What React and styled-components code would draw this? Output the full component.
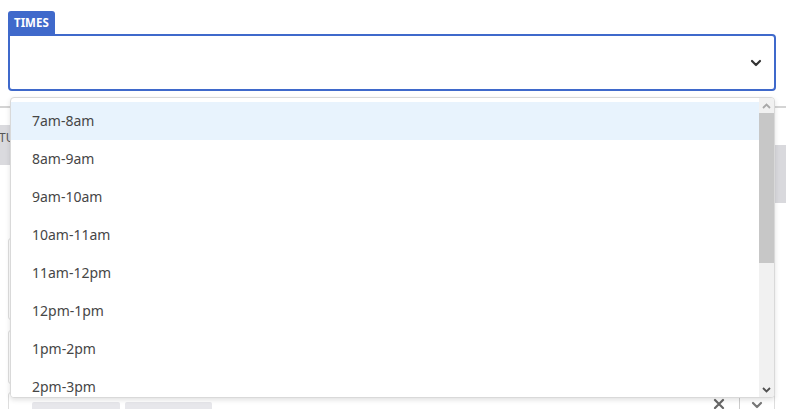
import React from "react";
import styled, {createGlobalStyle} from "styled-components";

const TIMES = [
    "7am-8am", "8am-9am", "9am-10am", "10am-11am",
    "11am-12pm", "12pm-1pm", "1pm-2pm", "2pm-3pm",
];

const GlobalStyle = createGlobalStyle`
  html, body {
    margin: 0;
    padding: 0;
    background: #fff;
    font-family: "Noto Sans", "Open Sans", sans-serif;
  }
`;

function Chevron({size = 14, color = "#333", weight = 2.2}) {
    return (
        <svg width={size} height={size} viewBox="0 0 14 14" fill="none">
            <path d="M3 5l4 4 4-4" stroke={color} strokeWidth={weight}
                  strokeLinecap="round" strokeLinejoin="round"/>
        </svg>
    );
}

function Cross() {
    return (
        <svg width="12" height="12" viewBox="0 0 12 12" fill="none">
            <path d="M2 2l8 8M10 2l-8 8" stroke="#666" strokeWidth="2.2" strokeLinecap="round"/>
        </svg>
    );
}

export default function App() {
    return (
        <Page>
            <GlobalStyle/>

            <Field>
                <Tab>Times</Tab>
                <SelectBox>
                    <Chevron/>
                </SelectBox>
            </Field>

            <Divider/>

            <Columns>
                <HeaderCell>Tuesday</HeaderCell>
                <SideBlock/>
            </Columns>

            <InputBox height={80} top={35}/>
            <InputBox height={52} top={10}/>

            <MultiSelect>
                <Chips>
                    <Chip w={88}/>
                    <Chip w={87}/>
                </Chips>
                <Controls>
                    <Cross/>
                    <Sep/>
                    <Chevron color="#777"/>
                </Controls>
            </MultiSelect>

            <Menu>
                <List>
                    {TIMES.map((t, i) => (
                        <Option key={t} active={i === 0}>{t}</Option>
                    ))}
                </List>
                <Scrollbar>
                    <ScrollBtn>
                        <svg width="9" height="6" viewBox="0 0 9 6">
                            <path d="M1 5l3.5-3.5L8 5" stroke="#a8a8a8" strokeWidth="1.8" fill="none"/>
                        </svg>
                    </ScrollBtn>
                    <Thumb/>
                    <Track/>
                    <ScrollBtn>
                        <svg width="9" height="6" viewBox="0 0 9 6">
                            <path d="M1 1l3.5 3.5L8 1" stroke="#505050" strokeWidth="1.8" fill="none"/>
                        </svg>
                    </ScrollBtn>
                </Scrollbar>
            </Menu>
        </Page>
    );
}

const Page = styled.div`
    position: relative;
    width: 786px;
    height: 409px;
    overflow: hidden;
    padding-top: 11px;
    box-sizing: border-box;
`;

const Field = styled.div`
    margin: 0 10px 0 8px;
    display: flex;
    flex-direction: column;
    align-items: flex-start;
`;

const Tab = styled.div`
    height: 23px;
    line-height: 23px;
    padding: 0 6px;
    background: #3f69cb;
    color: #fff;
    font-size: 11.5px;
    font-weight: 700;
    text-transform: uppercase;
    border-radius: 3px 3px 0 0;
`;

const SelectBox = styled.div`
    align-self: stretch;
    height: 57px;
    box-sizing: border-box;
    border: 2px solid #3f69cb;
    border-radius: 0 4px 4px 4px;
    display: flex;
    align-items: center;
    justify-content: flex-end;
    padding-right: 11px;
`;

const Divider = styled.div`
    margin-top: 15px;
    height: 2px;
    background: #d4d4d4;
`;

const Columns = styled.div`
    display: grid;
    grid-template-columns: 1fr 200px;
    gap: 30px;
    align-items: start;
    margin-top: 17px;
    margin-left: -1px;
`;

const HeaderCell = styled.div`
    height: 40px;
    box-sizing: border-box;
    padding-top: 4px;
    background: #dadade;
    color: #555;
    font-size: 12px;
    text-transform: uppercase;
`;

const SideBlock = styled.div`
    margin-top: 20px;
    height: 58px;
    background: #d9d9dd;
`;

const InputBox = styled.div`
    margin: ${p => p.top}px 11px 0 8px;
    height: ${p => p.height}px;
    border: 1px solid #dedede;
    border-radius: 3px;
`;

const MultiSelect = styled.div`
    margin: 8px 11px 0 8px;
    height: 40px;
    border: 1px solid #dedede;
    border-radius: 3px;
    display: flex;
    justify-content: space-between;
    padding: 9px 0 0 23px;
`;

const Chips = styled.div`
    display: flex;
    gap: 5px;
`;

const Chip = styled.div`
    width: ${p => p.w}px;
    height: 22px;
    background: #e7e7eb;
    border-radius: 2px;
`;

const Controls = styled.div`
    display: flex;
    align-items: flex-start;
    gap: 10px;
    padding-right: 10px;
    margin-top: -4px;

    svg:first-child {
        margin-right: 4px;
    }
`;

const Sep = styled.div`
    width: 1px;
    height: 20px;
    background: #ccc;
`;

const Menu = styled.div`
    position: absolute;
    top: 97px;
    left: 10px;
    width: 765px;
    height: 301px;
    box-sizing: border-box;
    background: #fff;
    border: 1px solid #d9d9d9;
    border-radius: 4px;
    box-shadow: 0 2px 5px rgba(0, 0, 0, 0.12);
    display: flex;
    overflow: hidden;
`;

const List = styled.div`
    flex: 1;
    padding-top: 4px;
    overflow: hidden;
`;

const Option = styled.div`
    height: 38px;
    line-height: 38px;
    padding-left: 21px;
    font-size: 14px;
    color: #464646;
    background: ${p => (p.active ? "#e8f3fd" : "#fff")};
`;

const Scrollbar = styled.div`
    width: 15px;
    display: flex;
    flex-direction: column;
    background: #f1f1f1;
`;

const ScrollBtn = styled.div`
    height: 15px;
    display: flex;
    align-items: center;
    justify-content: center;
`;

const Thumb = styled.div`
    height: 150px;
    background: #c7c7c7;
`;

const Track = styled.div`
    flex: 1;
`;
